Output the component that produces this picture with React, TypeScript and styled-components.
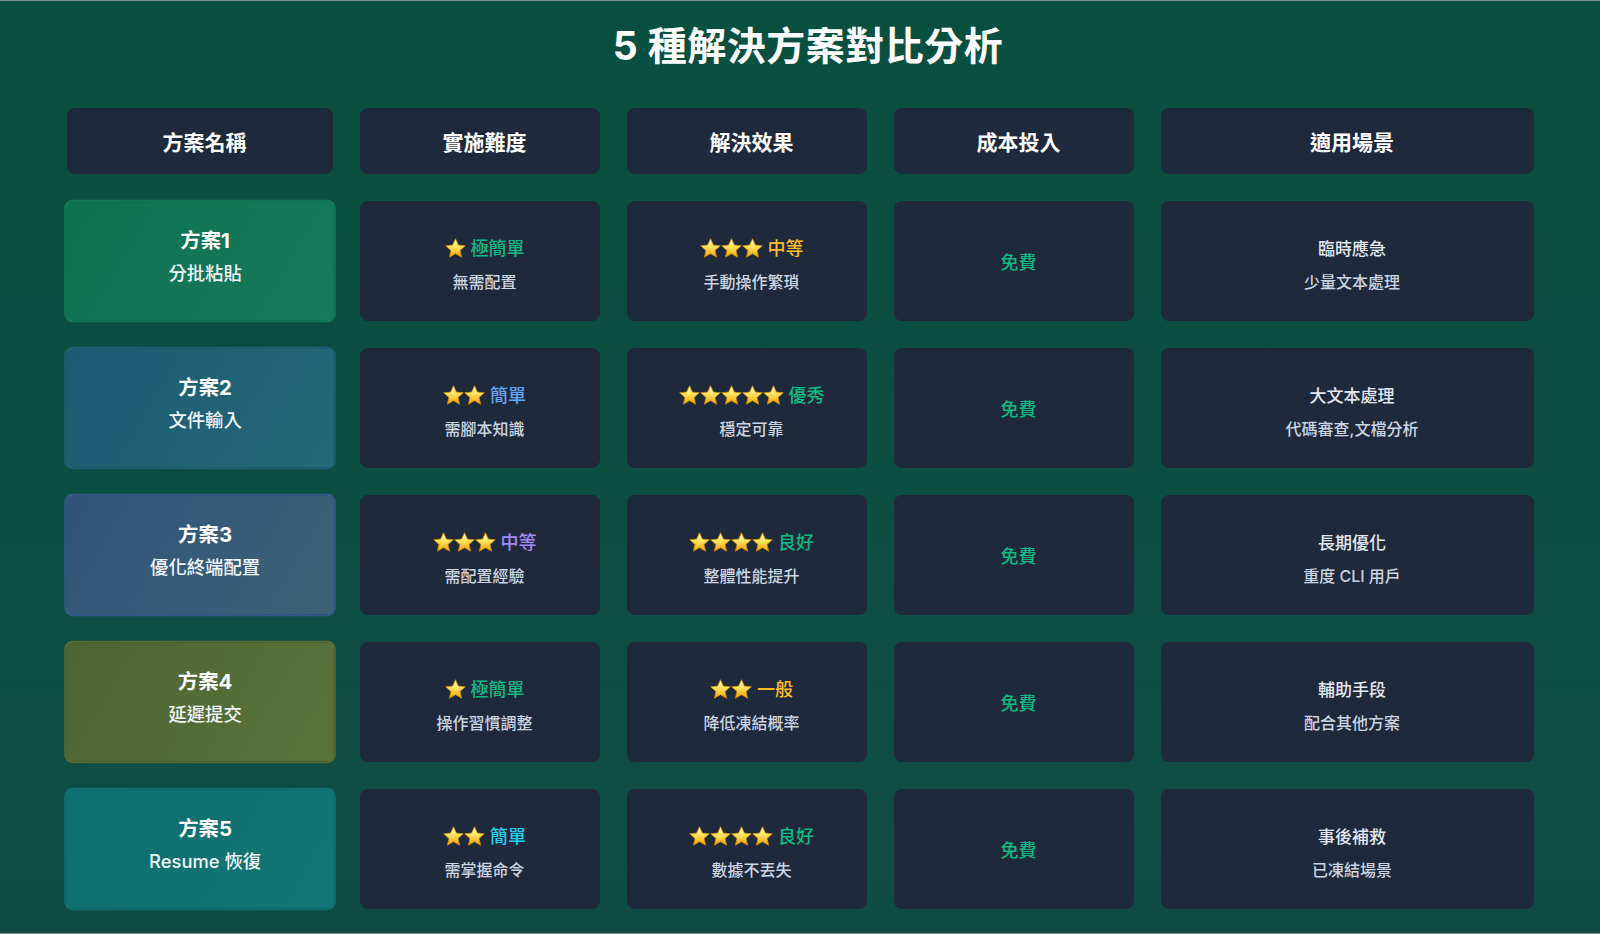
import styled, { createGlobalStyle } from "styled-components";

const GlobalStyle = createGlobalStyle`
    html, body {
        margin: 0;
        padding: 0;
    }
    body {
        font-family: Inter, "Noto Sans CJK TC", "Noto Sans", sans-serif;
        background: #0b4e40;
    }
`;

const Page = styled.div`
    box-sizing: border-box;
    min-height: 934px;
    padding: 20px 67px 20px;
    border-top: 1px solid #7d958e;
    border-bottom: 1px solid #7d958e;
    background: linear-gradient(180deg, #094f3f 0%, #0d4e43 55%, #104c46 100%);
    display: flex;
    flex-direction: column;
    align-items: center;
`;

const Title = styled.h1`
    margin: 0 0 37px;
    padding-left: 16px;
    font-size: 39px;
    line-height: 50px;
    font-weight: 700;
    color: #ffffff;
    letter-spacing: 0.5px;
`;

const Grid = styled.div`
    display: grid;
    grid-template-columns: 266px 240px 240px 240px 373px;
    grid-template-rows: 66px repeat(5, 120px);
    column-gap: 27px;
    row-gap: 27px;
`;

const HeadCell = styled.div`
    box-sizing: border-box;
    padding-left: 10px;
    background: #1e293b;
    border-radius: 8px;
    display: flex;
    align-items: center;
    justify-content: center;
    color: #ffffff;
    font-size: 21px;
    font-weight: 700;
`;

const Cell = styled.div<{ $drop?: boolean }>`
    box-sizing: border-box;
    padding-left: 10px;
    padding-top: ${(p) => (p.$drop ? "7px" : "0")};
    background: #1e293b;
    border-radius: 8px;
    display: flex;
    flex-direction: column;
    align-items: center;
    justify-content: center;
    gap: 10px;
    text-align: center;
`;

const NameCard = styled.div<{ $from: string; $to: string; $edge: string }>`
    box-sizing: border-box;
    padding: 0 0 7px 10px;
    border-radius: 8px;
    border: 2px solid ${(p) => p.$edge};
    background: linear-gradient(120deg, ${(p) => p.$from}, ${(p) => p.$to});
    transform: scale(1.02);
    display: flex;
    flex-direction: column;
    align-items: center;
    justify-content: center;
    gap: 9px;
    color: #ffffff;
`;

const NameTitle = styled.div`
    font-size: 20px;
    font-weight: 700;
    line-height: 24px;
`;

const NameSub = styled.div`
    font-size: 18px;
    font-weight: 500;
    line-height: 24px;
    color: #f1f5f9;
`;

const Level = styled.div<{ $color: string }>`
    display: flex;
    align-items: center;
    gap: 5px;
    font-size: 18px;
    font-weight: 500;
    line-height: 24px;
    color: ${(p) => p.$color};
`;

const Stars = styled.span`
    display: inline-flex;
    gap: 0;
`;

const Desc = styled.div`
    font-size: 16px;
    font-weight: 500;
    line-height: 22px;
    color: #cbd5e1;
`;

const Cost = styled.div`
    font-size: 18px;
    font-weight: 500;
    color: #10b981;
`;

const SceneMain = styled.div`
    font-size: 17px;
    font-weight: 500;
    line-height: 24px;
    color: #e2e8f0;
`;

function Star() {
    return (
        <svg width="21" height="21" viewBox="0 0 24 24">
            <defs>
                <linearGradient id="starFill" x1="0" y1="0" x2="0" y2="1">
                    <stop offset="0" stopColor="#fffce0" />
                    <stop offset="0.4" stopColor="#ffe766" />
                    <stop offset="1" stopColor="#f4a300" />
                </linearGradient>
            </defs>
            <path
                d="M12 0.8l3.3 7.3 7.9.8-6 5.3 1.8 7.8L12 17.9l-7 4.1 1.8-7.8-6-5.3 7.9-.8z"
                fill="url(#starFill)"
                stroke="#c78a00"
                strokeWidth="0.9"
                strokeLinejoin="round"
            />
        </svg>
    );
}

type Rating = { stars: number; label: string; color: string; desc: string };

type Plan = {
    title: string;
    name: string;
    from: string;
    to: string;
    edge: string;
    difficulty: Rating;
    effect: Rating;
    scene: string;
    sceneSub: string;
};

const plans: Plan[] = [
    {
        title: "方案1",
        name: "分批粘貼",
        from: "#0d7150",
        to: "#177a5d",
        edge: "#117a55",
        difficulty: { stars: 1, label: "極簡單", color: "#10b981", desc: "無需配置" },
        effect: { stars: 3, label: "中等", color: "#fbbf24", desc: "手動操作繁瑣" },
        scene: "臨時應急",
        sceneSub: "少量文本處理",
    },
    {
        title: "方案2",
        name: "文件輸入",
        from: "#1b5a73",
        to: "#256977",
        edge: "#1e5f78",
        difficulty: { stars: 2, label: "簡單", color: "#60a5fa", desc: "需腳本知識" },
        effect: { stars: 5, label: "優秀", color: "#10b981", desc: "穩定可靠" },
        scene: "大文本處理",
        sceneSub: "代碼審查,文檔分析",
    },
    {
        title: "方案3",
        name: "優化終端配置",
        from: "#32537a",
        to: "#3c6276",
        edge: "#37588a",
        difficulty: { stars: 3, label: "中等", color: "#a78bfa", desc: "需配置經驗" },
        effect: { stars: 4, label: "良好", color: "#10b981", desc: "整體性能提升" },
        scene: "長期優化",
        sceneSub: "重度 CLI 用戶",
    },
    {
        title: "方案4",
        name: "延遲提交",
        from: "#4d6434",
        to: "#58743a",
        edge: "#5a6a30",
        difficulty: { stars: 1, label: "極簡單", color: "#10b981", desc: "操作習慣調整" },
        effect: { stars: 2, label: "一般", color: "#fbbf24", desc: "降低凍結概率" },
        scene: "輔助手段",
        sceneSub: "配合其他方案",
    },
    {
        title: "方案5",
        name: "Resume 恢復",
        from: "#0f6e6f",
        to: "#137575",
        edge: "#0f7272",
        difficulty: { stars: 2, label: "簡單", color: "#22d3ee", desc: "需掌握命令" },
        effect: { stars: 4, label: "良好", color: "#10b981", desc: "數據不丟失" },
        scene: "事後補救",
        sceneSub: "已凍結場景",
    },
];

const headers = ["方案名稱", "實施難度", "解決效果", "成本投入", "適用場景"];

function RatingCell({ rating }: { rating: Rating }) {
    return (
        <Cell $drop>
            <Level $color={rating.color}>
                <Stars>
                    {Array.from({ length: rating.stars }).map((_, i) => (
                        <Star key={i} />
                    ))}
                </Stars>
                {rating.label}
            </Level>
            <Desc>{rating.desc}</Desc>
        </Cell>
    );
}

export default function App() {
    return (
        <Page>
            <GlobalStyle />
            <Title>5 種解決方案對比分析</Title>
            <Grid>
                {headers.map((h) => (
                    <HeadCell key={h}>{h}</HeadCell>
                ))}
                {plans.map((p) => [
                    <NameCard key={p.title + "n"} $from={p.from} $to={p.to} $edge={p.edge}>
                        <NameTitle>{p.title}</NameTitle>
                        <NameSub>{p.name}</NameSub>
                    </NameCard>,
                    <RatingCell key={p.title + "d"} rating={p.difficulty} />,
                    <RatingCell key={p.title + "e"} rating={p.effect} />,
                    <Cell key={p.title + "c"}>
                        <Cost>免費</Cost>
                    </Cell>,
                    <Cell key={p.title + "s"} $drop>
                        <SceneMain>{p.scene}</SceneMain>
                        <Desc>{p.sceneSub}</Desc>
                    </Cell>,
                ])}
            </Grid>
        </Page>
    );
}
